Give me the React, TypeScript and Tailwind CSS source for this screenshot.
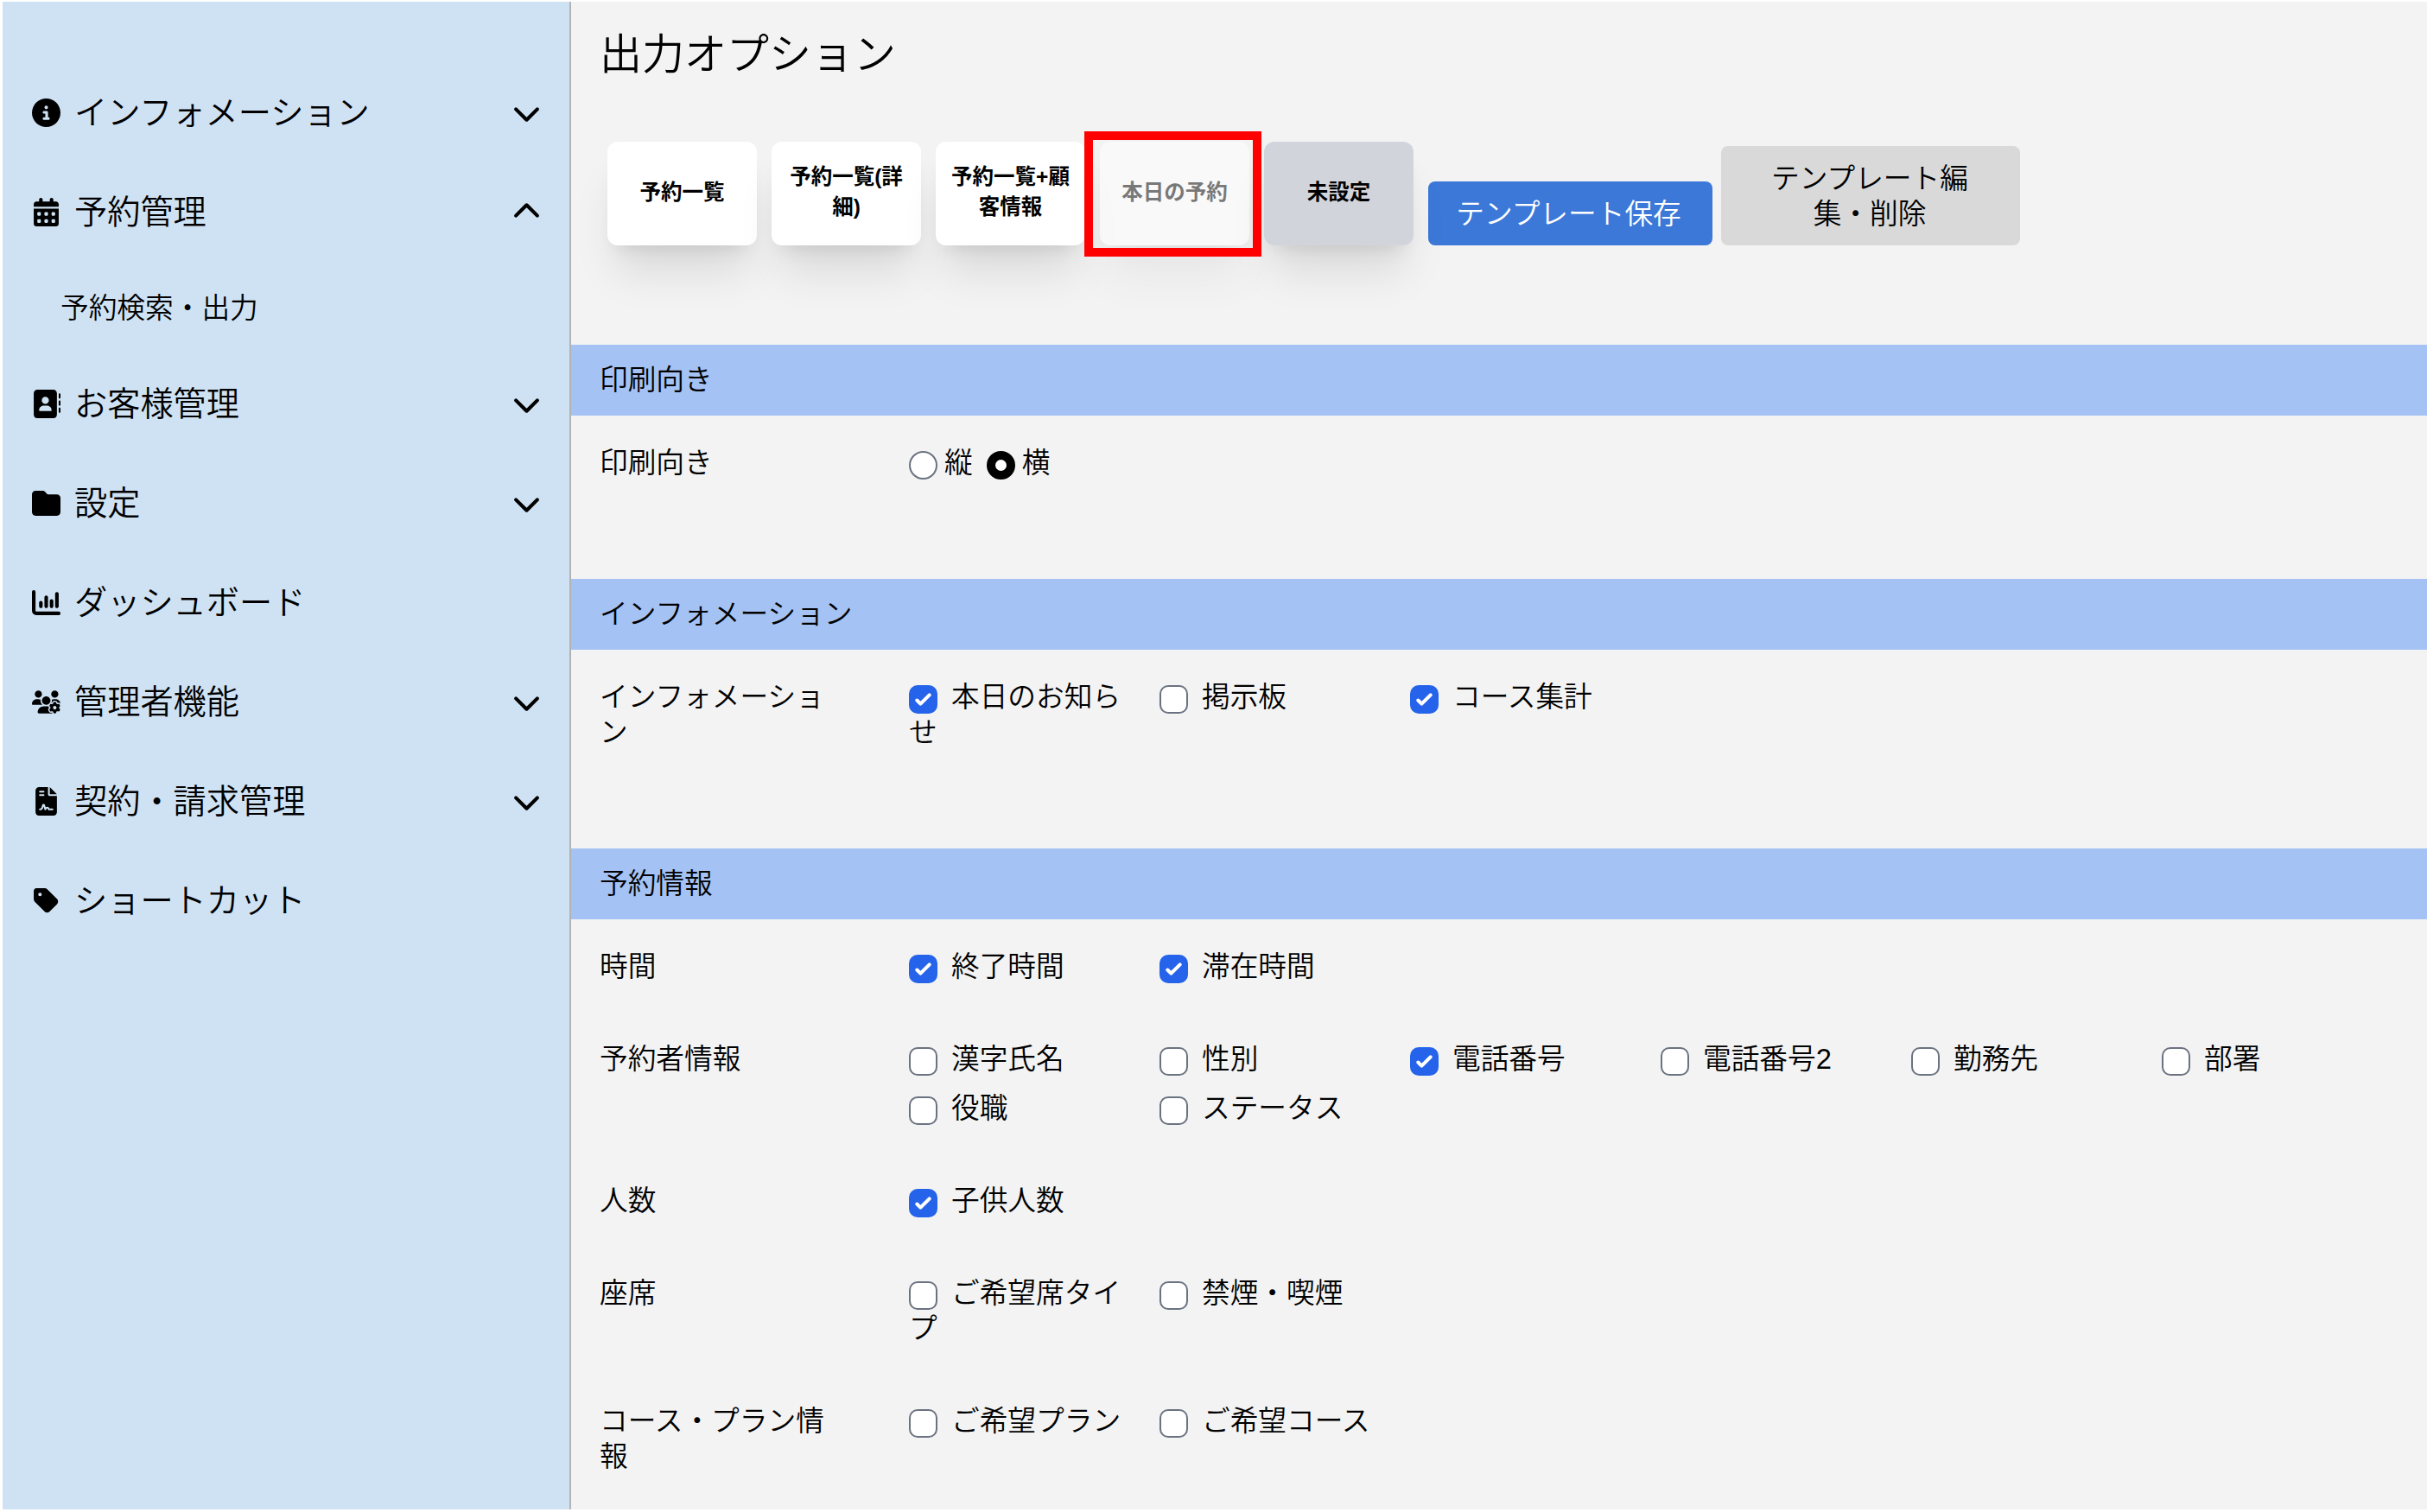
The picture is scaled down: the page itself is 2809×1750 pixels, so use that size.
import {clsx} from "clsx";
import type {ReactNode} from "react";
import type {IconType} from "react-icons";
import {
  FaAddressBook,
  FaCalendarDays,
  FaChartColumn,
  FaChevronDown,
  FaChevronUp,
  FaCircleInfo,
  FaFileContract,
  FaFolder,
  FaTag,
  FaUsersGear,
} from "react-icons/fa6";

type MenuItem = {
  label: string;
  icon: IconType;
  open?: boolean;
  leaf?: boolean;
  children?: string[];
};

type Option = {label: string; checked?: boolean};
type OptionRow = {label: string; options: Option[]};

const menu: MenuItem[] = [
  {label: "インフォメーション", icon: FaCircleInfo},
  {label: "予約管理", icon: FaCalendarDays, open: true, children: ["予約検索・出力"]},
  {label: "お客様管理", icon: FaAddressBook},
  {label: "設定", icon: FaFolder},
  {label: "ダッシュボード", icon: FaChartColumn, leaf: true},
  {label: "管理者機能", icon: FaUsersGear},
  {label: "契約・請求管理", icon: FaFileContract},
  {label: "ショートカット", icon: FaTag, leaf: true},
];

const templates = ["予約一覧", "予約一覧(詳細)", "予約一覧+顧客情報", "本日の予約", "未設定"];

const informationRows: OptionRow[] = [
  {
    label: "インフォメーション",
    options: [
      {label: "本日のお知らせ", checked: true},
      {label: "掲示板"},
      {label: "コース集計", checked: true},
    ],
  },
];

const reservationRows: OptionRow[] = [
  {
    label: "時間",
    options: [
      {label: "終了時間", checked: true},
      {label: "滞在時間", checked: true},
    ],
  },
  {
    label: "予約者情報",
    options: [
      {label: "漢字氏名"},
      {label: "性別"},
      {label: "電話番号", checked: true},
      {label: "電話番号2"},
      {label: "勤務先"},
      {label: "部署"},
      {label: "役職"},
      {label: "ステータス"},
    ],
  },
  {label: "人数", options: [{label: "子供人数", checked: true}]},
  {label: "座席", options: [{label: "ご希望席タイプ"}, {label: "禁煙・喫煙"}]},
  {label: "コース・プラン情報", options: [{label: "ご希望プラン"}, {label: "ご希望コース"}]},
];

function Sidebar() {
  return (
    <nav className="w-[658px] shrink-0 border-r-2 border-[#b3b3b3] bg-[#cfe2f3] pt-[71px]">
      {menu.map(({label, icon: Icon, open, leaf, children}) => (
        <div key={label}>
          <div className="flex h-[115px] items-center pr-[33px] pl-[34px]">
            <Icon className="size-[33px] shrink-0" />
            <span className="ml-4 flex-1 pt-px text-[38.2px] leading-none">{label}</span>
            {!leaf && (open ? <FaChevronUp className="size-[33px]" /> : <FaChevronDown className="size-[33px]" />)}
          </div>
          {children?.map((child) => (
            <div key={child} className="flex h-[107px] items-center pb-px pl-[67px]">
              {child}
            </div>
          ))}
        </div>
      ))}
    </nav>
  );
}

function TemplateButtons() {
  return (
    <div className="flex items-end pl-[9px]">
      <div className="flex gap-[17px]">
        {templates.map((name) => (
          <div key={name} className="relative">
            <button
              className={clsx(
                "flex h-[120px] w-[173px] items-center justify-center rounded-xl px-4 pb-1 text-center text-[24.5px] leading-[35px] font-bold shadow-[0_40px_50px_-10px_rgba(0,0,0,0.1),0_16px_20px_-12px_rgba(0,0,0,0.1)]",
                name === "未設定" ? "bg-[#d1d5db]" : "bg-white",
                name === "本日の予約" && "opacity-50",
              )}
            >
              {name}
            </button>
            {name === "本日の予約" && (
              <div className="absolute -top-[12px] -left-[18px] z-10 h-[145px] w-[205px] border-10 border-[#ff0000]" />
            )}
          </div>
        ))}
      </div>
      <button className="ml-[17px] h-[74px] w-[329px] rounded-lg bg-[#3c78d8] pr-1 text-white">
        テンプレート保存
      </button>
      <button className="ml-[10px] h-[115px] w-[346px] rounded-lg bg-[#d9d9d9] pr-[50px] pl-[48px] leading-[41px]">
        テンプレート編集・削除
      </button>
    </div>
  );
}

function Section({title, children}: {title: string; children: ReactNode}) {
  return (
    <section className="pb-[82px]">
      <h2 className="flex h-[82px] items-center bg-[#a4c2f4] pb-px pl-[33px]">{title}</h2>
      {children}
    </section>
  );
}

function Row({label, children}: {label: string; children: ReactNode}) {
  return (
    <div className="flex pt-[34px] pb-8 pl-[33px]">
      <div className="w-[358px] shrink-0 pr-20">{label}</div>
      {children}
    </div>
  );
}

function Radio({label, checked}: Option) {
  return (
    <label className="mr-4">
      <span
        className={clsx(
          "mr-2 -mb-1.5 inline-block size-[33px] rounded-full align-[-2px]",
          checked ? "border-10 border-black bg-white" : "border-2 border-[#6b7280] bg-white",
        )}
      />
      {label}
    </label>
  );
}

function Checkbox({label, checked}: Option) {
  return (
    <label className="w-[290px] pr-4">
      <span
        className={clsx(
          "mr-4 -mb-1.5 inline-block size-[33px] rounded-[10px] align-[-2px]",
          checked ? "bg-[#2563eb]" : "border-2 border-[#6b7280] bg-white",
        )}
      >
        {checked && (
          <svg viewBox="0 0 16 16" fill="white" className="size-full">
            <path d="M12.207 4.793a1 1 0 010 1.414l-5 5a1 1 0 01-1.414 0l-2-2a1 1 0 011.414-1.414L6.5 9.086l4.293-4.293a1 1 0 011.414 0z" />
          </svg>
        )}
      </span>
      {label}
    </label>
  );
}

function OptionRows({rows}: {rows: OptionRow[]}) {
  return rows.map((row) => (
    <Row key={row.label} label={row.label}>
      <div className="flex flex-wrap gap-y-4">
        {row.options.map((option) => (
          <Checkbox key={option.label} {...option} />
        ))}
      </div>
    </Row>
  ));
}

export default function App() {
  return (
    <div className="h-[1750px] w-[2809px] overflow-hidden bg-white pt-[2px] pb-[3px] pl-[3px] font-['Liberation_Sans','Noto_Sans_CJK_JP',sans-serif] text-[32.7px] leading-[41px] font-[350] text-black">
      <div className="flex h-full overflow-hidden">
        <Sidebar />
        <main className="flex-1 bg-[#f3f3f3]">
          <div className="h-[397px] pl-[33px]">
            <h1 className="h-[162px] pt-[31px] text-[49px] leading-[61px]">出力オプション</h1>
            <TemplateButtons />
          </div>
          <Section title="印刷向き">
            <Row label="印刷向き">
              <div>
                <Radio label="縦" />
                <Radio label="横" checked />
              </div>
            </Row>
          </Section>
          <Section title="インフォメーション">
            <OptionRows rows={informationRows} />
          </Section>
          <Section title="予約情報">
            <OptionRows rows={reservationRows} />
          </Section>
        </main>
      </div>
    </div>
  );
}
